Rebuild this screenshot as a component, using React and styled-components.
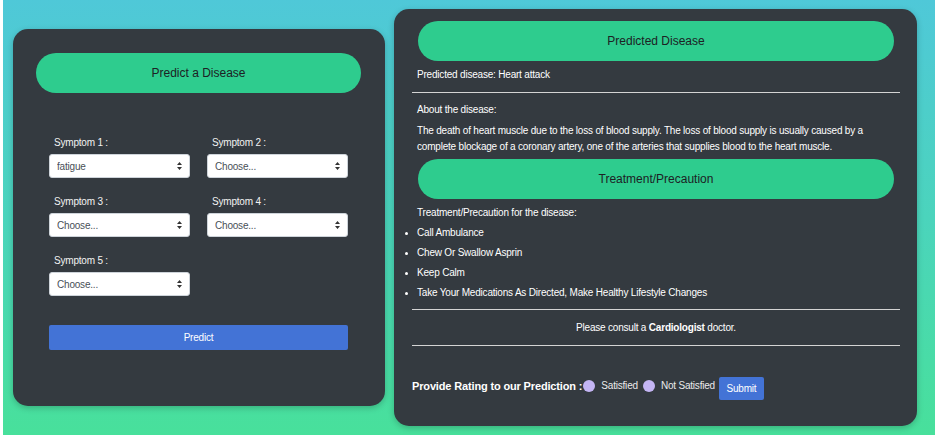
import React from 'react'
import styled, { createGlobalStyle } from 'styled-components'

const Global = createGlobalStyle`
  html, body { margin: 0; padding: 0; background: #fff; }
  body { font-family: "Liberation Sans", Arial, sans-serif; }
  * { box-sizing: border-box; }
`;

const Page = styled.div`
  margin-left: 3px;
  width: 932px;
  height: 435px;
  background: linear-gradient(to bottom, #4fc8d8 0%, #4bd4bc 50%, #48e09b 100%);
  display: flex;
  align-items: center;
  padding-left: 10px;
  gap: 9px;
`;

const Card = styled.div`
  background: #343a40;
  border-radius: 15px;
  box-shadow: 0 2px 6px rgba(0, 0, 0, 0.22);
  color: #fff;
`;

const LeftCard = styled(Card)`
  width: 372px;
  height: 377px;
  padding: 24px 24px 0 23px;
`;

const RightCard = styled(Card)`
  width: 523px;
  height: 417px;
  padding: 12px 17px 0 18px;
`;

const Pill = styled.div`
  height: 40px;
  border-radius: 20px;
  background: #2ecc8e;
  color: #1d2124;
  font-size: 12px;
  display: flex;
  align-items: center;
  justify-content: center;
  margin: ${p => p.$m || '0'};
`;

const Form = styled.div`
  padding: 42px 13px 0;
`;

const Grid = styled.div`
  display: grid;
  grid-template-columns: 141px 141px;
  column-gap: 17px;
  row-gap: 16px;
`;

const Field = styled.div`
  display: flex;
  flex-direction: column;
`;

const Label = styled.label`
  font-size: 10px;
  letter-spacing: -0.2px;
  line-height: 14px;
  padding-top: 1px;
  margin: 0 0 4px 5px;
  color: #f2f2f2;
`;

const SelectWrap = styled.div`
  position: relative;
  height: 24px;
`;

const Select = styled.select`
  appearance: none;
  width: 100%;
  height: 24px;
  border: 1px solid #ced4da;
  border-radius: 3px;
  background: #fff;
  color: #495057;
  font-family: "Liberation Sans", Arial, sans-serif;
  font-size: 10px;
  letter-spacing: -0.2px;
  padding: 0 20px 0 7px;
  outline: none;
`;

const Arrows = styled.svg`
  position: absolute;
  right: 8px;
  top: 8px;
  pointer-events: none;
`;

const BlueButton = styled.button`
  background: #4373d6;
  color: #fff;
  border: none;
  border-radius: 2px;
  font-family: "Liberation Sans", Arial, sans-serif;
  font-size: 10px;
  letter-spacing: -0.2px;
  padding: 0;
`;

const PredictButton = styled(BlueButton)`
  display: block;
  width: 100%;
  height: 25px;
  margin-top: 29px;
`;

const Text = styled.p`
  margin: ${p => p.$mt || 0}px 0 0 ${p => (p.$center ? 0 : 5)}px;
  padding-top: 1px;
  font-size: 10px;
  letter-spacing: -0.2px;
  line-height: ${p => p.$lh || 14}px;
  text-align: ${p => (p.$center ? 'center' : 'left')};
`;

const Rule = styled.div`
  height: 1px;
  background: #d4d4d4;
  margin-top: ${p => p.$mt}px;
`;

const List = styled.ul`
  margin: 0;
  padding: 0 0 0 5px;
  list-style: disc;
  font-size: 10px;
  letter-spacing: -0.2px;
  line-height: 14px;

  li {
    margin-top: 5px;
    padding-top: 1px;
  }
  li::marker {
    font-size: 9px;
  }
`;

const RatingRow = styled.div`
  margin-top: 31px;
  display: flex;
  align-items: flex-start;
  font-size: 10px;
  letter-spacing: -0.2px;
  line-height: 18px;
`;

const RatingTitle = styled.span`
  font-weight: bold;
  font-size: 11px;
  letter-spacing: -0.15px;
`;

const Radio = styled.input.attrs({ type: 'radio' })`
  appearance: none;
  width: 12px;
  height: 12px;
  border-radius: 50%;
  background: #c4b5f4;
  margin: 3px 6px 0 1px;
`;

const RadioLabel = styled.span`
  color: #eaeaea;
  margin-right: 4px;
`;

const SubmitButton = styled(BlueButton)`
  width: 45px;
  height: 23px;
`;

const Arrow = () => (
  <Arrows width="5" height="8" viewBox="0 0 5 8">
    <path d="M2.5 0 L5 3 L0 3 Z M2.5 8 L5 5 L0 5 Z" fill="#333" />
  </Arrows>
);

const symptoms = [
  { label: 'Symptom 1 :', value: 'fatigue' },
  { label: 'Symptom 2 :', value: 'Choose...' },
  { label: 'Symptom 3 :', value: 'Choose...' },
  { label: 'Symptom 4 :', value: 'Choose...' },
  { label: 'Symptom 5 :', value: 'Choose...' },
];

const precautions = [
  'Call Ambulance',
  'Chew Or Swallow Asprin',
  'Keep Calm',
  'Take Your Medications As Directed, Make Healthy Lifestyle Changes',
];

const App = () => {
  return (
    <>
      <Global />
      <Page>
        <LeftCard>
          <Pill>Predict a Disease</Pill>
          <Form>
            <Grid>
              {symptoms.map(s => (
                <Field key={s.label}>
                  <Label>{s.label}</Label>
                  <SelectWrap>
                    <Select defaultValue={s.value}>
                      <option>{s.value}</option>
                    </Select>
                    <Arrow />
                  </SelectWrap>
                </Field>
              ))}
            </Grid>
            <PredictButton>Predict</PredictButton>
          </Form>
        </LeftCard>

        <RightCard>
          <Pill $m="0 6px">Predicted Disease</Pill>
          <Text $mt={6}>Predicted disease: Heart attack</Text>
          <Rule $mt={10} />
          <Text $mt={9}>About the disease:</Text>
          <Text $mt={5} $lh={16}>
            The death of heart muscle due to the loss of blood supply. The loss of blood supply is usually caused by a
            complete blockage of a coronary artery, one of the arteries that supplies blood to the heart muscle.
          </Text>
          <Pill $m="4px 6px 0">Treatment/Precaution</Pill>
          <Text $mt={6}>Treatment/Precaution for the disease:</Text>
          <List>
            {precautions.map(p => <li key={p}>{p}</li>)}
          </List>
          <Rule $mt={9} />
          <Text $mt={10} $center>
            Please consult a <b>Cardiologist</b> doctor.
          </Text>
          <Rule $mt={10} />
          <RatingRow>
            <RatingTitle>Provide Rating to our Prediction :</RatingTitle>
            <Radio name="rating" />
            <RadioLabel>Satisfied</RadioLabel>
            <Radio name="rating" />
            <RadioLabel>Not Satisfied</RadioLabel>
            <SubmitButton>Submit</SubmitButton>
          </RatingRow>
        </RightCard>
      </Page>
    </>
  )
}

export default App
